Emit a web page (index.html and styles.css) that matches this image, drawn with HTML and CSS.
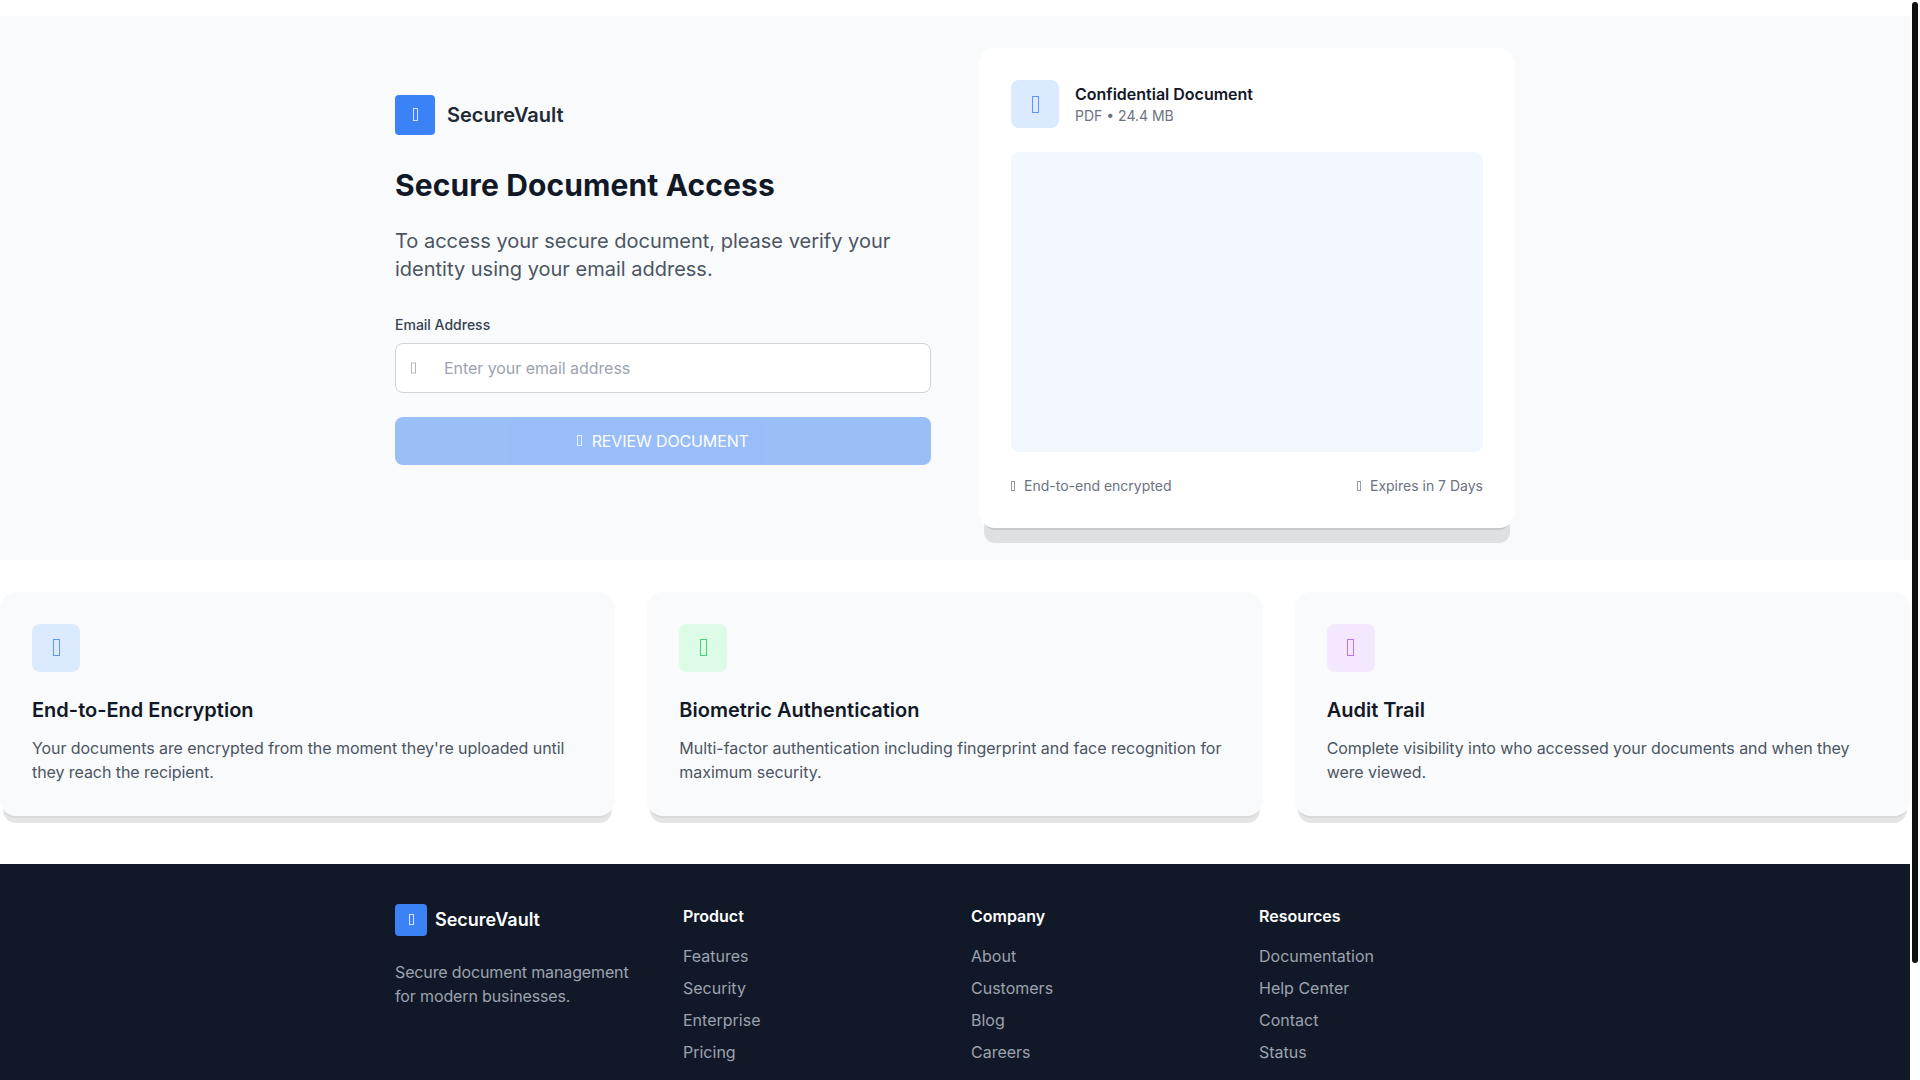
FILE: index.html
```html
<!DOCTYPE html>
<html lang="en">
<head>
<meta charset="utf-8">
<title>SecureVault</title>
<link rel="stylesheet" href="styles.css">
</head>
<body>
<div class="scroll-thumb"></div>
<div class="topstrip"></div>
<section class="hero">
  <div class="hero-grid">
    <div class="intro">
      <div class="brand">
        <span class="brand-mark"><i class="tofu tofu-brand"></i></span>
        <span class="brand-name">SecureVault</span>
      </div>
      <h1>Secure Document Access</h1>
      <p class="lead">To access your secure document, please verify your identity using your email address.</p>
      <form class="form">
        <label class="label" for="email">Email Address</label>
        <div class="input-wrap">
          <i class="tofu tofu-input"></i>
          <input id="email" class="input" type="email" placeholder="Enter your email address">
        </div>
        <button class="btn" type="button" disabled><i class="tofu tofu-btn"></i>REVIEW DOCUMENT</button>
      </form>
    </div>
    <div class="doc-card">
      <div class="doc-head">
        <span class="tile tile-blue"><i class="tofu"></i></span>
        <div>
          <div class="doc-title">Confidential Document</div>
          <div class="doc-sub">PDF • 24.4 MB</div>
        </div>
      </div>
      <div class="preview"></div>
      <div class="doc-foot">
        <span class="meta"><i class="tofu tofu-meta"></i>End-to-end encrypted</span>
        <span class="meta"><i class="tofu tofu-meta"></i>Expires in 7 Days</span>
      </div>
    </div>
  </div>
</section>
<section class="features">
  <article class="feature">
    <span class="tile tile-blue"><i class="tofu"></i></span>
    <h3>End-to-End Encryption</h3>
    <p>Your documents are encrypted from the moment they're uploaded until they reach the recipient.</p>
  </article>
  <article class="feature feature-wide">
    <span class="tile tile-green"><i class="tofu"></i></span>
    <h3>Biometric Authentication</h3>
    <p>Multi-factor authentication including fingerprint and face recognition for maximum security.</p>
  </article>
  <article class="feature">
    <span class="tile tile-purple"><i class="tofu"></i></span>
    <h3>Audit Trail</h3>
    <p>Complete visibility into who accessed your documents and when they were viewed.</p>
  </article>
</section>
<footer class="footer">
  <div class="footer-grid">
    <div>
      <div class="foot-brand">
        <span class="foot-mark"><i class="tofu tofu-foot"></i></span>
        <span class="foot-name">SecureVault</span>
      </div>
      <p class="foot-text">Secure document management for modern businesses.</p>
    </div>
    <div>
      <h4>Product</h4>
      <ul><li>Features</li><li>Security</li><li>Enterprise</li><li>Pricing</li></ul>
    </div>
    <div>
      <h4>Company</h4>
      <ul><li>About</li><li>Customers</li><li>Blog</li><li>Careers</li></ul>
    </div>
    <div>
      <h4>Resources</h4>
      <ul><li>Documentation</li><li>Help Center</li><li>Contact</li><li>Status</li></ul>
    </div>
  </div>
</footer>
</body>
</html>
```
FILE: styles.css
```css
* { box-sizing: border-box; }
html { background: #fff; }
body { margin: 0 10px 0 0; font-family: Inter, "Liberation Sans", sans-serif; color: #111827; background: #fff; }
h1, h3, h4, p, ul { margin: 0; padding: 0; }
.scroll-thumb { position: fixed; top: 2px; right: 2px; width: 6px; height: 961px; background: #111; border-radius: 3px; }
.tofu { display: inline-block; width: 7px; height: 17px; border: 1px solid currentColor; opacity: .8; flex: none; }
.tofu-brand { width: 5px; height: 13px; }
.tofu-input { width: 5px; height: 11px; }
.tofu-btn { width: 5px; height: 11px; margin-right: 9.5px; }
.tofu-meta { width: 4px; height: 10px; margin-right: 9px; vertical-align: 0; opacity: .7; }
.tofu-foot { width: 5px; height: 11px; }
.topstrip { height: 16px; }
.hero { background: #f9fafb; padding: 32px 0; }
.hero-grid { max-width: 1152px; margin: 0 auto; padding: 0 16px; display: grid; grid-template-columns: 1fr 1fr; gap: 48px; align-items: center; }
.brand { display: flex; align-items: center; gap: 12px; margin-bottom: 32px; }
.brand-mark { width: 40px; height: 40px; border-radius: 4px; background: #3b82f6; color: #fff; display: flex; align-items: center; justify-content: center; }
.brand-name { font-size: 20px; line-height: 28px; font-weight: 600; color: #1f2937; }
h1 { font-size: 30px; line-height: 36px; font-weight: 700; letter-spacing: .12px; color: #111827; margin-bottom: 24px; }
.lead { font-size: 20px; line-height: 28px; color: #4b5563; margin-bottom: 32px; }
.form { margin-bottom: 16.5px; }
.label { display: block; font-size: 14px; line-height: 20px; font-weight: 500; color: #374151; margin-bottom: 8px; }
.input-wrap { position: relative; margin-bottom: 24px; }
.tofu-input { position: absolute; left: 16px; top: 50%; transform: translateY(-50%); color: #9ca3af; }
.input { display: block; width: 100%; height: 50px; padding: 0 16px 0 48px; border: 1px solid #d1d5db; border-radius: 8px; background: #fff; font: 16px/24px Inter, "Liberation Sans", sans-serif; color: #111827; outline: none; letter-spacing: -.05px; }
.input::placeholder { color: #9ca3af; opacity: 1; }
.btn { display: flex; align-items: center; justify-content: center; width: 100%; height: 48px; border: 0; border-radius: 8px; background: #3b82f6; opacity: .5; color: #fff; font: 400 16px/24px Inter, "Liberation Sans", sans-serif; letter-spacing: -.12px; }
.doc-card { background: #fff; border-radius: 16px; padding: 32px; box-shadow: 0 7px 0 -5px rgba(0,0,0,.1), 0 20px 0 -5px rgba(0,0,0,.1); }
.doc-head { display: flex; align-items: center; gap: 16px; margin-bottom: 24px; }
.tile { width: 48px; height: 48px; border-radius: 8px; display: flex; align-items: center; justify-content: center; flex: none; }
.tile-blue { background: #dbeafe; color: #3b82f6; }
.tile-green { background: #dcfce7; color: #22c55e; }
.tile-purple { background: #f3e8ff; color: #a855f7; }
.doc-title { font-size: 16px; line-height: 24px; font-weight: 600; color: #111827; }
.doc-sub { font-size: 14px; line-height: 20px; color: #6b7280; }
.preview { height: 300px; border-radius: 8px; background: #f3f8ff; margin-bottom: 24px; }
.doc-foot { display: flex; justify-content: space-between; }
.meta { font-size: 14px; line-height: 19.5px; color: #6b7280; }
.features { display: grid; grid-template-columns: repeat(3, 1fr); gap: 32px; padding: 32px 0 48px; }
.feature { background: #f9fafb; border-radius: 16px; padding: 32px; box-shadow: 0 10px 0 -3px rgba(0,0,0,.1), 0 4px 0 -2px rgba(0,0,0,.05); }
.feature h3 { font-size: 20px; line-height: 28px; font-weight: 600; color: #111827; margin: 24px 0 12px; }
.feature p { font-size: 16px; line-height: 24px; letter-spacing: -.07px; color: #4b5563; }
.feature-wide p { letter-spacing: -.02px; }
.footer { background: #111827; min-height: 349px; padding: 40px 0; }
.footer-grid { max-width: 1152px; margin: 0 auto; padding: 0 16px; display: grid; grid-template-columns: repeat(4, 1fr); gap: 32px; }
.foot-brand { display: flex; align-items: center; gap: 8px; margin-bottom: 24px; }
.foot-mark { width: 32px; height: 32px; border-radius: 4px; background: #3b82f6; color: #fff; display: flex; align-items: center; justify-content: center; }
.foot-name { font-size: 18px; line-height: 28px; font-weight: 600; color: #fff; }
.foot-text { font-size: 16px; line-height: 24px; letter-spacing: -.13px; color: #9ca3af; }
.footer h4 { font-size: 16px; line-height: 24px; font-weight: 600; color: #fff; margin-bottom: 16px; }
.footer ul { list-style: none; display: flex; flex-direction: column; gap: 8px; }
.footer li { font-size: 16px; line-height: 24px; color: #9ca3af; }
```
